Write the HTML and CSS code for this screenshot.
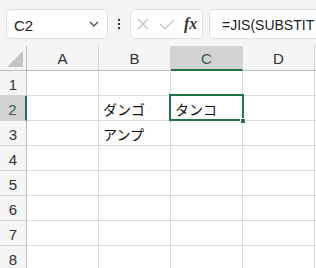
FILE: index.html
```html
<!DOCTYPE html>
<html lang="ja">
<head>
    <meta charset="UTF-8">
    <title>Sheet</title>
    <link rel="stylesheet" href="styles.css">
</head>
<body>
    <div class="toolbar">
        <div class="namebox">
            <span>C2</span>
            <svg class="chevron" width="10" height="6" viewBox="0 0 10 6"><path d="M1 1 L5 5 L9 1" fill="none" stroke="#444" stroke-width="1.2"/></svg>
        </div>
        <div class="grip">
            <span></span><span></span><span></span>
        </div>
        <div class="fxbox">
            <svg width="12" height="12" viewBox="0 0 12 12"><path d="M1 1 L11 11 M11 1 L1 11" stroke="#c4c4c4" stroke-width="1.2"/></svg>
            <svg width="16" height="11" viewBox="0 0 16 11"><path d="M1 5 L6 10 L15 1" fill="none" stroke="#c4c4c4" stroke-width="1.2"/></svg>
            <span class="fx">fx</span>
        </div>
        <div class="formula">=JIS(SUBSTIT</div>
    </div>

    <div class="sheet">
        <div class="hd corner"><i></i></div>
        <div class="hd col">A</div>
        <div class="hd col">B</div>
        <div class="hd col active">C</div>
        <div class="hd col">D</div>
        <div class="hd col"></div>

        <div class="hd row">1</div>
        <div class="cell"></div><div class="cell"></div><div class="cell"></div><div class="cell"></div><div class="cell"></div>

        <div class="hd row active">2</div>
        <div class="cell"></div>
        <div class="cell">ダンゴ</div>
        <div class="cell selected">タンコ<span class="handle"></span></div>
        <div class="cell"></div><div class="cell"></div>

        <div class="hd row">3</div>
        <div class="cell"></div>
        <div class="cell">アンプ</div>
        <div class="cell"></div><div class="cell"></div><div class="cell"></div>

        <div class="hd row">4</div>
        <div class="cell"></div><div class="cell"></div><div class="cell"></div><div class="cell"></div><div class="cell"></div>
        <div class="hd row">5</div>
        <div class="cell"></div><div class="cell"></div><div class="cell"></div><div class="cell"></div><div class="cell"></div>
        <div class="hd row">6</div>
        <div class="cell"></div><div class="cell"></div><div class="cell"></div><div class="cell"></div><div class="cell"></div>
        <div class="hd row">7</div>
        <div class="cell"></div><div class="cell"></div><div class="cell"></div><div class="cell"></div><div class="cell"></div>
        <div class="hd row">8</div>
        <div class="cell"></div><div class="cell"></div><div class="cell"></div><div class="cell"></div><div class="cell"></div>
    </div>
</body>
</html>
```

FILE: styles.css
```css
* {
    box-sizing: border-box;
}
body {
    margin: 0;
    background: #f5f5f5;
    font-family: "Liberation Sans", Arial, sans-serif;
    color: #222;
    overflow: hidden;
}
.toolbar {
    height: 46px;
    display: flex;
    align-items: flex-start;
    padding: 9px 0 0 6px;
    white-space: nowrap;
}
.namebox,
.fxbox,
.formula {
    flex-shrink: 0;
    height: 30px;
    background: #ffffff;
    border: 1px solid #e0e0e0;
    border-radius: 5px;
    display: flex;
    align-items: center;
}
.namebox {
    width: 102px;
    padding: 2px 8px 0 7px;
    justify-content: space-between;
    font-size: 15px;
}
.chevron {
    margin-top: -2px;
}
.grip {
    flex-shrink: 0;
    width: 22px;
    height: 30px;
    display: flex;
    flex-direction: column;
    align-items: center;
    justify-content: center;
    gap: 2px;
}
.grip span {
    width: 2px;
    height: 2px;
    background: #333;
}
.fxbox {
    width: 73px;
    padding: 0 4px 0 6px;
}
.fxbox svg:first-child {
    margin-right: 10px;
}
.fx {
    margin-left: 9px;
    font-family: "Liberation Serif", serif;
    font-style: italic;
    font-weight: bold;
    font-size: 16px;
    color: #333;
}
.formula {
    flex: 1 0 0;
    margin-left: 6px;
    padding: 1px 0 0 12px;
    font-size: 14px;
    border-right: none;
    border-radius: 5px 0 0 5px;
    overflow: hidden;
}
.sheet {
    display: grid;
    grid-template-columns: 27px repeat(4, 72px) 1fr;
    grid-auto-rows: 25px;
    background: #ffffff;
}
.hd {
    background: #f5f5f5;
    color: #333;
    font-size: 15px;
    display: flex;
    align-items: center;
    justify-content: center;
    border-right: 1px solid #d4d4d4;
    border-bottom: 1px solid #d4d4d4;
}
.hd.col {
    border-bottom-color: #bdbdbd;
    padding-top: 1px;
}
.hd.row {
    border-right-color: #bdbdbd;
    padding-top: 2px;
}
.corner {
    border-bottom-color: #bdbdbd;
    border-right-color: #bdbdbd;
    align-items: flex-end;
    justify-content: flex-end;
    padding: 0 3px 3px 0;
}
.corner i {
    width: 0;
    height: 0;
    border-left: 16px solid transparent;
    border-bottom: 16px solid #c4c4c4;
}
.hd.col.active {
    background: #d2d2d2;
    color: #3b5a48;
    border-bottom: 2px solid #217346;
}
.hd.row.active {
    background: #d2d2d2;
    color: #3b5a48;
    border-right: 2px solid #217346;
}
.cell {
    position: relative;
    border-right: 1px solid #dcdcdc;
    border-bottom: 1px solid #dcdcdc;
    font-family: "Noto Sans CJK JP", sans-serif;
    font-size: 14px;
    color: #111;
    padding: 1px 0 0 4px;
    display: flex;
    align-items: center;
}
.selected::after {
    content: "";
    position: absolute;
    top: -2px;
    left: -2px;
    right: -2px;
    bottom: -1px;
    border: 2px solid #217346;
}
.handle {
    position: absolute;
    right: -4px;
    bottom: -4px;
    width: 6px;
    height: 6px;
    background: #217346;
    border: 1px solid #ffffff;
    z-index: 1;
}
```
